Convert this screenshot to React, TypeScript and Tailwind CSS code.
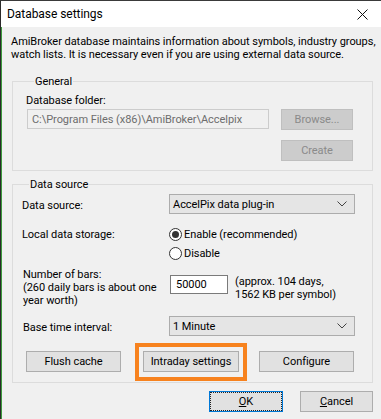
import React from 'react';

const Chevron = () => (
  <svg width="10" height="6" viewBox="0 0 10 6" className="shrink-0">
    <path d="M0.5 0.5 L5 5 L9.5 0.5" fill="none" stroke="#444" strokeWidth="1" />
  </svg>
);

const Select = ({ value }: { value: string }) => (
  <div className="w-[186px] h-[20px] border border-[#acacac] bg-[#e5e5e5] flex items-center justify-between pl-[3px] pr-[7px]">
    <span>{value}</span>
    <Chevron />
  </div>
);

const Button = ({
  children,
  width,
  disabled,
}: {
  children: React.ReactNode;
  width: string;
  disabled?: boolean;
}) => (
  <div
    className={`${width} h-[21px] border flex items-center justify-center ${
      disabled ? 'bg-[#cccccc] border-[#bfbfbf] text-[#8a8a8a]' : 'bg-[#e1e1e1] border-[#adadad] text-black'
    }`}
  >
    {children}
  </div>
);

const Radio = ({ checked, label }: { checked?: boolean; label: string }) => (
  <div className="flex items-center h-[19px]">
    <div className="w-[13px] h-[13px] rounded-full border border-[#333] bg-white flex items-center justify-center">
      {checked && <div className="w-[7px] h-[7px] rounded-full bg-[#333]" />}
    </div>
    <span className="ml-[2px]">{label}</span>
  </div>
);

export default function App() {
  return (
    <div className="w-[381px] h-[419px] overflow-hidden bg-[#f0f0f0] text-[11px] leading-[13px] tracking-[-0.05px] whitespace-nowrap text-black font-['Roboto','Segoe_UI',sans-serif]">
      {/* Title bar */}
      <div className="h-[27px] bg-white flex items-center justify-between pl-[6px] pr-[13px] border-t border-[#3a3a3a] border-l border-l-[#2a2a2a]">
        <span className="text-[12px]">Database settings</span>
        <svg width="11" height="11" viewBox="0 0 11 11">
          <path d="M0.5 0.5 L10.5 10.5 M10.5 0.5 L0.5 10.5" stroke="#111" strokeWidth="1" />
        </svg>
      </div>

      <div className="border-l border-[#2a2a2a] h-[392px] shadow-[inset_1px_0_0_#3c9a3c]">
        {/* Description */}
        <div className="pt-[8px] pl-[10px]">
          <p>AmiBroker database maintains information about symbols, industry groups,</p>
          <p>watch lists. It is necessary even if you are using external data source.</p>
        </div>

        {/* General */}
        <fieldset className="mt-[14px] ml-[11px] w-[361px] border border-[#dcdcdc] pl-[14px] pb-[9px]">
          <legend className="ml-[7px] px-[1px]">General</legend>
          <div className="mt-[6px] -ml-[1px]">Database folder:</div>
          <div className="mt-[2px] flex">
            <div className="w-[242px] h-[20px] border border-[#cccccc] bg-[#f0f0f0] text-[#6d6d6d] flex items-center pl-[4px]">
              C:\Program Files (x86)\AmiBroker\Accelpix
            </div>
            <div className="ml-[12px] flex flex-col gap-[10px]">
              <Button width="w-[72px]" disabled>
                Browse...
              </Button>
              <Button width="w-[72px]" disabled>
                Create
              </Button>
            </div>
          </div>
        </fieldset>

        {/* Data source */}
        <fieldset className="mt-[7px] ml-[11px] w-[361px] border border-[#dcdcdc] pl-[9px] pb-[10px]">
          <legend className="ml-[7px] px-[1px]">Data source</legend>
          <div className="mt-[3px] flex items-center">
            <div className="w-[147px] pt-[3px]">Data source:</div>
            <Select value="AccelPix data plug-in" />
          </div>

          <div className="mt-[11px] flex">
            <div className="w-[147px] pt-[3px]">Local data storage:</div>
            <div className="flex flex-col">
              <Radio checked label="Enable (recommended)" />
              <Radio label="Disable" />
            </div>
          </div>

          <div className="mt-[5px] flex">
            <div className="w-[148px] pl-[1px]">
              <p>Number of bars:</p>
              <p>(260 daily bars is about one</p>
              <p>year worth)</p>
            </div>
            <div className="mt-[7px] w-[58px] h-[19px] border border-[#7a7a7a] bg-white flex items-center pl-[5px]">
              50000
            </div>
            <div className="ml-[7px] mt-[7px]">
              <p>(approx. 104 days,</p>
              <p>1562 KB per symbol)</p>
            </div>
          </div>

          <div className="mt-[9px] flex items-center">
            <div className="w-[147px] pl-[1px] pt-[3px]">Base time interval:</div>
            <Select value="1 Minute" />
          </div>

          <div className="mt-[15px] flex pl-[4px]">
            <Button width="w-[95px]">Flush cache</Button>
            <div className="relative ml-[22px]">
              <Button width="w-[96px]">Intraday settings</Button>
              <span className="absolute -left-[8px] -right-[8px] -top-[8px] -bottom-[9px] border-[4px] border-[#f7821e]" />
            </div>
            <div className="ml-[20px]">
              <Button width="w-[95px]">Configure</Button>
            </div>
          </div>
        </fieldset>

        {/* Dialog buttons */}
        <div className="mt-[8px] flex pl-[208px]">
          <div className="w-[74px] h-[21px] border border-[#0078d7] bg-[#e1e1e1] flex">
            <div className="flex-1 border border-dotted border-[#222] flex items-center justify-center">
              <span>
                <span className="underline">O</span>K
              </span>
            </div>
          </div>
          <div className="ml-[17px]">
            <Button width="w-[73px]">
              <span>
                <span className="underline">C</span>ancel
              </span>
            </Button>
          </div>
        </div>
      </div>
    </div>
  );
}
